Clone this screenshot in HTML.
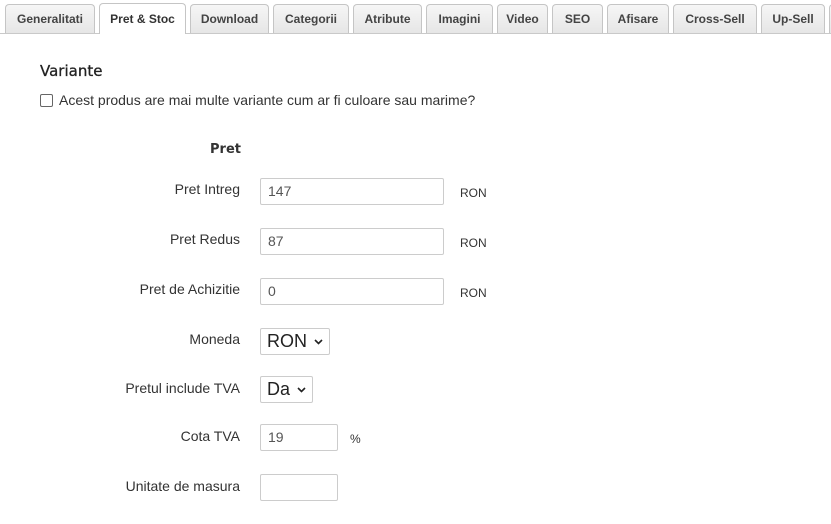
<!DOCTYPE html>
<html><head><meta charset="utf-8"><style>
body{margin:0;width:831px;height:524px;background:#fff;font-family:"Liberation Sans",Arial,sans-serif;position:relative;overflow:hidden;color:#333}
.line{position:absolute;left:0;right:0;top:33px;height:1px;background:#c9c9c9}
.tab{position:absolute;top:4px;border:1px solid #c5c5c5;border-bottom:none;border-radius:4px 4px 0 0;background:linear-gradient(#f6f6f6,#e6e6e6);font-weight:bold;font-size:12px;color:#444;text-align:center;line-height:29px;box-sizing:border-box;height:29px}
.tab.act{background:#fff;top:3px;height:31px;color:#333;line-height:31px;z-index:2}
.a{position:absolute}
.lbl{position:absolute;right:591px;font-size:14px;color:#333;white-space:nowrap}
.in{position:absolute;left:260px;height:27px;border:1px solid #ccc;border-radius:2px;box-sizing:border-box;font-size:14px;color:#555;padding-left:7px;line-height:25px}
.sel{position:absolute;left:260px;height:27px;border:1px solid #ccc;border-radius:2px;box-sizing:border-box;font-size:18px;color:#222;padding-left:6px;line-height:25px}
.sel svg{position:absolute;right:6px;top:10px}
.u{position:absolute;left:460px;font-size:12px;color:#333}
</style></head><body>
<div class="line"></div>
<div class="tab" style="left:5px;width:90px">Generalitati</div>
<div class="tab act" style="left:99px;width:87px">Pret &amp; Stoc</div>
<div class="tab" style="left:190px;width:79px">Download</div>
<div class="tab" style="left:273px;width:76px">Categorii</div>
<div class="tab" style="left:353px;width:69px">Atribute</div>
<div class="tab" style="left:426px;width:67px">Imagini</div>
<div class="tab" style="left:497px;width:51px">Video</div>
<div class="tab" style="left:552px;width:51px">SEO</div>
<div class="tab" style="left:607px;width:62px">Afisare</div>
<div class="tab" style="left:673px;width:84px">Cross-Sell</div>
<div class="tab" style="left:761px;width:64px">Up-Sell</div>
<div class="tab" style="left:829px;width:20px"></div>
<div class="a" style="left:40px;top:62px;font-family:'DejaVu Sans',sans-serif;font-size:15px;color:#222;-webkit-text-stroke:0.3px #222">Variante</div>
<div class="a" style="left:40px;top:94px;width:11px;height:11px;border:1px solid #666;border-radius:2px"></div>
<div class="a" style="left:59px;top:92px;font-size:14px;color:#333">Acest produs are mai multe variante cum ar fi culoare sau marime?</div>
<div class="a" style="left:210px;top:142px;font-family:'DejaVu Sans',sans-serif;font-size:13px;font-weight:bold;color:#333">Pret</div>
<div class="lbl" style="top:181px">Pret Intreg</div><div class="in" style="top:178px;width:184px">147</div><div class="u" style="top:186px">RON</div>
<div class="lbl" style="top:231px">Pret Redus</div><div class="in" style="top:228px;width:184px">87</div><div class="u" style="top:236px">RON</div>
<div class="lbl" style="top:281px">Pret de Achizitie</div><div class="in" style="top:278px;width:184px">0</div><div class="u" style="top:286px">RON</div>
<div class="lbl" style="top:331px">Moneda</div><div class="sel" style="top:328px;width:70px">RON<svg width="9" height="6" viewBox="0 0 9 6"><path d="M1 1l3.5 3.5L8 1" fill="none" stroke="#222" stroke-width="1.6"/></svg></div>
<div class="lbl" style="top:380px">Pretul include TVA</div><div class="sel" style="top:376px;width:53px">Da<svg width="9" height="6" viewBox="0 0 9 6"><path d="M1 1l3.5 3.5L8 1" fill="none" stroke="#222" stroke-width="1.6"/></svg></div>
<div class="lbl" style="top:428px">Cota TVA</div><div class="in" style="top:424px;width:78px">19</div><div class="u" style="left:350px;top:432px">%</div>
<div class="lbl" style="top:478px">Unitate de masura</div><div class="in" style="top:474px;width:78px"></div>
</body></html>
